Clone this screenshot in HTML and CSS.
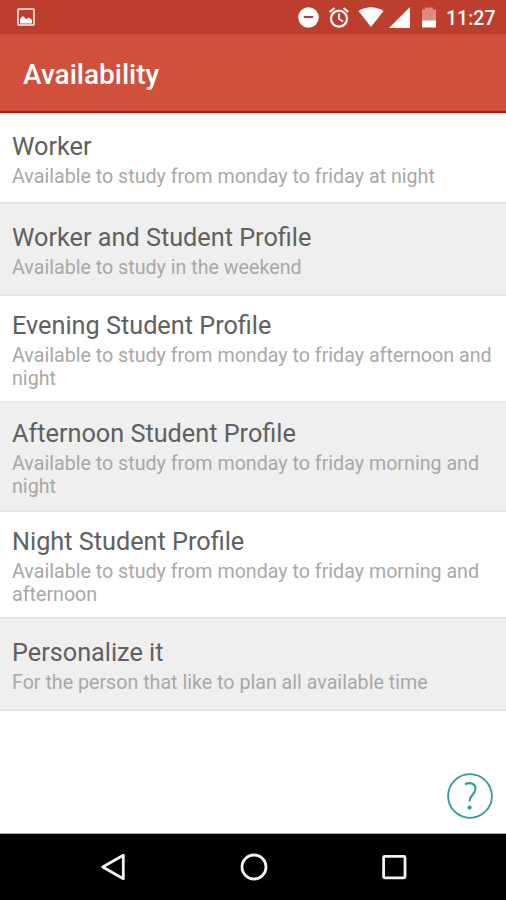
FILE: index.html
```html
<!DOCTYPE html>
<html lang="en">
<head>
<meta charset="utf-8">
<title>Availability</title>
<link rel="stylesheet" href="styles.css">
</head>
<body>
<div class="screen">
  <div class="status">
    <svg class="status-left" width="18" height="18" viewBox="0 0 18 18"><rect x="1" y="1" width="16" height="16" rx="1" fill="none" stroke="#f3c8c1" stroke-width="2"/><path d="M3 15.500V11L6 8L9 11L12 9.500L15 12V15.500Z" fill="#fff"/></svg>
    <svg class="status-icons" width="148" height="26" viewBox="298 4 148 26">
      <circle cx="308.500" cy="17.500" r="10.300" fill="#fff"/><path d="M303.800 17H313.200" stroke="#bd3e2c" stroke-width="2"/>
      <g fill="none" stroke="#fff"><circle cx="339" cy="18.700" r="8" stroke-width="2.300"/><path d="M339 13.500V19L343 21.500" stroke-width="1.800"/><path d="M329.700 12L334.500 8M343.500 8L348.300 12" stroke-width="2.200"/></g>
      <path d="M358.500 11Q371 3.500 383.500 11L371 27Z" fill="#fff"/>
      <path d="M389 28L410 7V28Z" fill="#fff"/>
      <path d="M422 9.500H425V7.500H433V9.500H436V21H422Z" fill="#db8b80"/><path d="M422 20.500H436V27.500H422Z" fill="#fff"/>
    </svg>
    <span class="clock">11:27</span>
  </div>
  <header class="bar"><h1>Availability</h1></header>
  <main class="content">
    <ul class="list">
      <li class="row"><h2>Worker</h2><p>Available to study from monday to friday at night</p></li>
      <li class="row alt second"><h2>Worker and Student Profile</h2><p>Available to study in the weekend</p></li>
      <li class="row tall evening"><h2>Evening Student Profile</h2><p>Available to study from monday to friday afternoon and night</p></li>
      <li class="row tall alt"><h2>Afternoon Student Profile</h2><p>Available to study from monday to friday morning and night</p></li>
      <li class="row tall night"><h2>Night Student Profile</h2><p>Available to study from monday to friday morning and afternoon</p></li>
      <li class="row alt last"><h2>Personalize it</h2><p>For the person that like to plan all available time</p></li>
    </ul>
    <svg class="help" width="46" height="46" viewBox="0 0 46 46" fill="none" stroke="#35999a"><circle cx="23" cy="23" r="21.900" stroke-width="1.800"/><path d="M18 11.200C23 8.800 28.500 10.500 28.500 15.500C28.500 21.500 22.500 22 22.500 28.500" stroke-width="2.100"/><circle cx="22.600" cy="34.500" r="2.100" fill="#35999a" stroke="none"/></svg>
  </main>
  <nav class="nav">
    <svg width="28" height="30" viewBox="0 0 28 30"><path d="M24.300 3.300V26.700L3.700 15Z" fill="none" stroke="#f2f2f2" stroke-width="2.800" stroke-linejoin="round"/></svg>
    <svg width="28" height="30" viewBox="0 0 28 30"><circle cx="14" cy="15" r="12" fill="none" stroke="#f2f2f2" stroke-width="2.800"/></svg>
    <svg width="28" height="30" viewBox="0 0 28 30"><rect x="3.600" y="4.400" width="21.400" height="21.400" rx="1" fill="none" stroke="#f2f2f2" stroke-width="2.800"/></svg>
  </nav>
</div>
</body>
</html>
```
FILE: styles.css
```css
* { box-sizing: border-box; margin: 0; padding: 0; }
body { font-family: Roboto, "Liberation Sans", sans-serif; background: #fff; }
.screen { width: 506px; height: 900px; display: flex; flex-direction: column; overflow: hidden; }
svg { display: block; flex: none; }
.status { height: 34px; flex: none; background: #bd3e2c; display: flex; align-items: center; padding: 0 10px 0 17px; }
.status-icons { margin-left: auto; }
.clock { width: 50px; color: #fff; font-size: 19.5px; font-weight: 500; line-height: 34px; white-space: nowrap; padding-top: 3px; }
.bar { height: 79px; flex: none; background: #d0503c; border-bottom: 2px solid #bd1514; padding: 0 23px; }
.bar h1 { color: #fff; font-size: 28px; font-weight: 500; line-height: 82px; }
.content { flex: 1; display: flex; flex-direction: column; justify-content: space-between; border-bottom: 1px solid #aaa; }
.list { list-style: none; }
.row { height: 91px; padding: 19px 12px 0; border-bottom: 2px solid #e4e4e4; }
.row.second { height: 92px; }
.row.tall { height: 107px; padding-top: 15px; }
.row.tall.alt { height: 109px; padding-top: 16px; }
.row.tall.evening { border-bottom-color: #ececec; }
.row.tall.night { padding-top: 15px; }
.row.last { height: 92px; }
.alt { background: #efefef; }
.row h2 { color: #606060; font-size: 25.25px; font-weight: 400; line-height: 30px; white-space: nowrap; }
.row p { color: #a8a8a8; font-size: 19.67px; line-height: 23px; padding-top: 3px; }
.help { align-self: flex-end; margin: 0 13px 14px 0; }
.nav { height: 66px; flex: none; background: #000; display: flex; justify-content: space-between; padding: 17.5px 98px 0 99px; }
```
